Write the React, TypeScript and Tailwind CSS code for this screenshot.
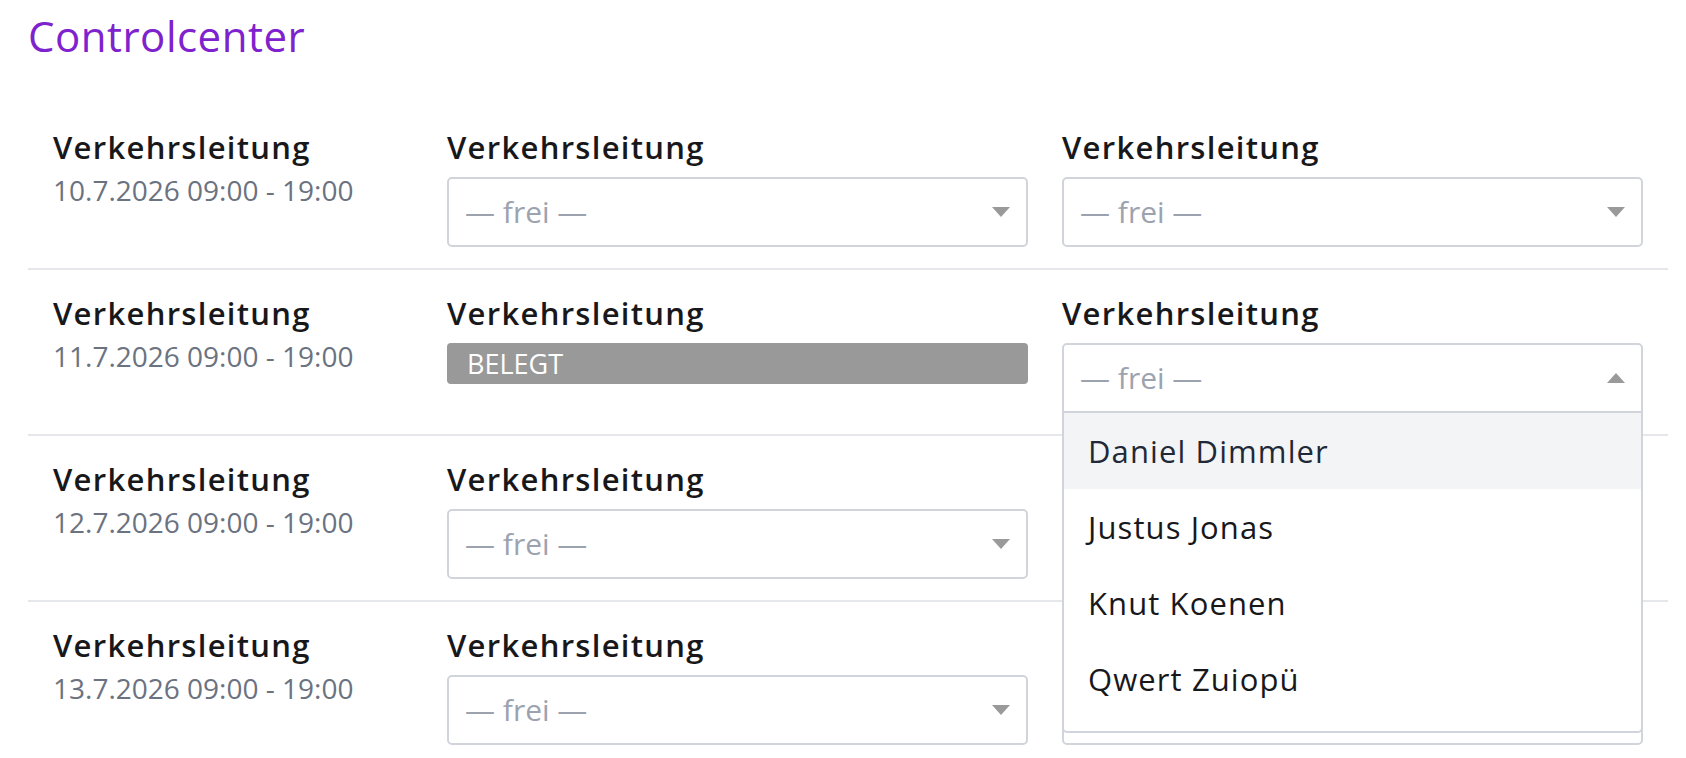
import React from 'react';

type Slot = 'free' | 'taken' | 'open';

const shifts: { date: string; slots: [Slot, Slot] }[] = [
  { date: '10.7.2026 09:00 - 19:00', slots: ['free', 'free'] },
  { date: '11.7.2026 09:00 - 19:00', slots: ['taken', 'open'] },
  { date: '12.7.2026 09:00 - 19:00', slots: ['free', 'free'] },
  { date: '13.7.2026 09:00 - 19:00', slots: ['free', 'free'] },
];

const people = ['Daniel Dimmler', 'Justus Jonas', 'Knut Koenen', 'Qwert Zuiopü'];

const Caret: React.FC<{ up?: boolean }> = ({ up }) => (
  <svg width="18" height="10" viewBox="0 0 18 10" className="shrink-0">
    <path d={up ? 'M0 10H18L9 0Z' : 'M0 0H18L9 10Z'} fill="#9a9a9a" />
  </svg>
);

const Label: React.FC<{ hidden?: boolean; children: React.ReactNode }> = ({ hidden, children }) => (
  <div
    className={`text-[31px] leading-[36px] font-semibold tracking-[1.3px] text-[#18181b] ${hidden ? 'invisible' : ''}`}
  >
    {children}
  </div>
);

// covered: the field sits under the open dropdown of the row above
const SlotField: React.FC<{ state: Slot; covered?: boolean }> = ({ state, covered }) => {
  if (state === 'taken') {
    return (
      <div className="flex h-[41px] items-center rounded-[4px] bg-[#999999] pl-5 text-[27px] leading-[32px] text-white">
        BELEGT
      </div>
    );
  }

  const open = state === 'open';

  return (
    <div className="relative">
      <div
        className={`flex h-[70px] items-center justify-between border-2 border-[#d1d5db] bg-white pl-4 pr-4 ${
          open ? 'rounded-t-[5px]' : 'rounded-[5px]'
        }`}
      >
        <span className={`text-[30px] leading-[36px] text-[#9ca3af] ${covered ? 'invisible' : ''}`}>— frei —</span>
        <Caret up={open} />
      </div>
      {open && (
        <ul className="absolute left-0 right-0 top-full z-10 rounded-b-[5px] border-2 border-t-0 border-[#d1d5db] bg-white pb-[14px]">
          {people.map((name, i) => (
            <li
              key={name}
              className={`flex h-[76px] items-center pl-6 text-[31px] leading-[36px] tracking-[1.1px] ${
                i === 0 ? 'bg-[#f3f4f6] text-[#1f2937]' : 'text-[#18181b]'
              }`}
            >
              {name}
            </li>
          ))}
        </ul>
      )}
    </div>
  );
};

const App: React.FC = () => {
  return (
    <div className="h-[758px] overflow-hidden bg-white pt-[12px] pl-[28px] pr-[18px] font-['Open_Sans',sans-serif]">
      <h1 className="mb-[44px] text-[42px] leading-[48px] font-normal tracking-[0.5px] text-[#7e22ce]">Controlcenter</h1>

      <div>
        {shifts.map((shift, r) => (
          <div
            key={shift.date}
            className="grid grid-cols-[360px_1fr_1fr] gap-x-[34px] border-b-2 border-[#e5e7eb] px-[25px] pt-[25px] pb-[21px]"
          >
            <div>
              <Label>Verkehrsleitung</Label>
              <div className="mt-[8px] text-[28px] leading-[34px] text-[#6b7280]">{shift.date}</div>
            </div>
            {shift.slots.map((slot, i) => {
              const covered = i === 1 && r >= 2;
              return (
                <div key={i}>
                  <Label hidden={covered}>Verkehrsleitung</Label>
                  <div className="mt-[12px]">
                    <SlotField state={slot} covered={covered} />
                  </div>
                </div>
              );
            })}
          </div>
        ))}
      </div>
    </div>
  );
};

export default App;
